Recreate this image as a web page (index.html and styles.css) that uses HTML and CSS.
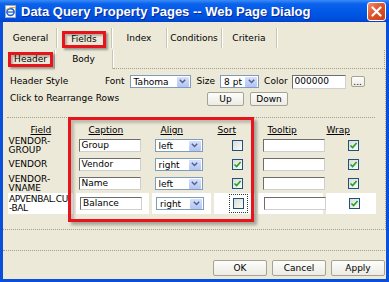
FILE: index.html
```html
<!DOCTYPE html>
<html lang="en">
<head>
    <meta charset="UTF-8">
    <title>Data Query Property Pages -- Web Page Dialog</title>
    <link rel="stylesheet" href="styles.css">
</head>
<body>

    <div class="window">
        <div class="titlebar">
            <svg class="app-icon" width="13" height="13" viewBox="0 0 13 13">
                <rect x="1.5" y="0.5" width="10" height="12" fill="#fff" stroke="#9aa8c0"/>
                <ellipse cx="6.5" cy="7" rx="3.6" ry="3.4" fill="none" stroke="#1b64d8" stroke-width="1.6"/>
                <rect x="3" y="6.4" width="7" height="1.3" fill="#1b64d8"/>
                <path d="M1 6 Q6 1 12 3" fill="none" stroke="#e8a818" stroke-width="1"/>
            </svg>
            <span class="title">Data Query Property Pages -- Web Page Dialog</span>
            <span class="close-btn">
                <svg width="11" height="11" viewBox="0 0 11 11">
                    <path d="M1.5 1.5 L9.5 9.5 M9.5 1.5 L1.5 9.5" stroke="#fff" stroke-width="2.2" stroke-linecap="round"/>
                </svg>
            </span>
        </div>

        <div class="frame">
            <div class="client">
                <div class="tabs">
                    <div class="tab first">General</div>
                    <div class="tab"><span class="marked">Fields</span></div>
                    <div class="tab">Index</div>
                    <div class="tab">Conditions</div>
                    <div class="tab">Criteria</div>
                </div>

                <div class="subtabs">
                    <div class="subtab header-tab"><span class="marked">Header</span></div>
                    <div class="subtab body-tab">Body</div>
                    <div class="subtab-rest"></div>
                </div>

                <div class="sheet">
                    <div class="style-row">
                        <span class="row-label">Header Style</span>
                        <span class="opt-label">Font</span>
                        <span class="select font-select"><span class="val">Tahoma</span><span class="arrow"><svg width="7" height="5" viewBox="0 0 7 5"><path d="M0.8 0.8 L3.5 3.6 L6.2 0.8" fill="none" stroke="#4d6185" stroke-width="1.4"/></svg></span></span>
                        <span class="opt-label size-label">Size</span>
                        <span class="select size-select"><span class="val">8 pt</span><span class="arrow"><svg width="7" height="5" viewBox="0 0 7 5"><path d="M0.8 0.8 L3.5 3.6 L6.2 0.8" fill="none" stroke="#4d6185" stroke-width="1.4"/></svg></span></span>
                        <span class="opt-label color-label">Color</span>
                        <span class="textbox color-box">000000</span>
                        <button class="btn dots-btn">...</button>
                    </div>

                    <div class="order-row">
                        <span class="order-label">Click to Rearrange Rows</span>
                        <button class="btn up-btn">Up</button>
                        <button class="btn down-btn">Down</button>
                    </div>

                    <div class="fields-wrap">
                        <table class="fields">
                            <tr class="head">
                                <th class="c-field">Field</th>
                                <th class="c-caption">Caption</th>
                                <th class="c-align">Align</th>
                                <th class="c-sort">Sort</th>
                                <th class="c-tip">Tooltip</th>
                                <th class="c-wrap">Wrap</th>
                            </tr>
                            <tr>
                                <td class="c-field"><div class="fname">VENDOR-<br>GROUP</div></td>
                                <td class="c-caption"><span class="textbox cap-box">Group</span></td>
                                <td class="c-align"><span class="select align-select"><span class="val">left</span><span class="arrow"><svg width="7" height="5" viewBox="0 0 7 5"><path d="M0.8 0.8 L3.5 3.6 L6.2 0.8" fill="none" stroke="#4d6185" stroke-width="1.4"/></svg></span></span></td>
                                <td class="c-sort"><span class="check"></span></td>
                                <td class="c-tip"><span class="textbox tip-box"></span></td>
                                <td class="c-wrap"><span class="check on"><svg width="9" height="9" viewBox="0 0 9 9"><path d="M1.5 4.5 L3.6 6.6 L7.6 2" fill="none" stroke="#21a121" stroke-width="1.6"/></svg></span></td>
                            </tr>
                            <tr>
                                <td class="c-field"><div class="fname">VENDOR</div></td>
                                <td class="c-caption"><span class="textbox cap-box">Vendor</span></td>
                                <td class="c-align"><span class="select align-select"><span class="val">right</span><span class="arrow"><svg width="7" height="5" viewBox="0 0 7 5"><path d="M0.8 0.8 L3.5 3.6 L6.2 0.8" fill="none" stroke="#4d6185" stroke-width="1.4"/></svg></span></span></td>
                                <td class="c-sort"><span class="check on"><svg width="9" height="9" viewBox="0 0 9 9"><path d="M1.5 4.5 L3.6 6.6 L7.6 2" fill="none" stroke="#21a121" stroke-width="1.6"/></svg></span></td>
                                <td class="c-tip"><span class="textbox tip-box"></span></td>
                                <td class="c-wrap"><span class="check on"><svg width="9" height="9" viewBox="0 0 9 9"><path d="M1.5 4.5 L3.6 6.6 L7.6 2" fill="none" stroke="#21a121" stroke-width="1.6"/></svg></span></td>
                            </tr>
                            <tr>
                                <td class="c-field"><div class="fname">VENDOR-<br>VNAME</div></td>
                                <td class="c-caption"><span class="textbox cap-box">Name</span></td>
                                <td class="c-align"><span class="select align-select"><span class="val">left</span><span class="arrow"><svg width="7" height="5" viewBox="0 0 7 5"><path d="M0.8 0.8 L3.5 3.6 L6.2 0.8" fill="none" stroke="#4d6185" stroke-width="1.4"/></svg></span></span></td>
                                <td class="c-sort"><span class="check on"><svg width="9" height="9" viewBox="0 0 9 9"><path d="M1.5 4.5 L3.6 6.6 L7.6 2" fill="none" stroke="#21a121" stroke-width="1.6"/></svg></span></td>
                                <td class="c-tip"><span class="textbox tip-box"></span></td>
                                <td class="c-wrap"><span class="check on"><svg width="9" height="9" viewBox="0 0 9 9"><path d="M1.5 4.5 L3.6 6.6 L7.6 2" fill="none" stroke="#21a121" stroke-width="1.6"/></svg></span></td>
                            </tr>
                            <tr class="current">
                                <td class="c-field"><div class="fname tight">APVENBAL.CU<br>-BAL</div></td>
                                <td class="c-caption"><span class="textbox cap-box">Balance</span></td>
                                <td class="c-align"><span class="select align-select"><span class="val">right</span><span class="arrow"><svg width="7" height="5" viewBox="0 0 7 5"><path d="M0.8 0.8 L3.5 3.6 L6.2 0.8" fill="none" stroke="#4d6185" stroke-width="1.4"/></svg></span></span></td>
                                <td class="c-sort"><span class="check focus"></span></td>
                                <td class="c-tip"><span class="textbox tip-box"></span></td>
                                <td class="c-wrap"><span class="check on"><svg width="9" height="9" viewBox="0 0 9 9"><path d="M1.5 4.5 L3.6 6.6 L7.6 2" fill="none" stroke="#21a121" stroke-width="1.6"/></svg></span></td>
                            </tr>
                        </table>
                        <!-- annotation box drawn over the caption/align/sort columns -->
                        <div class="highlight"></div>
                    </div>
                </div>

                <div class="divider"></div>

                <div class="actions">
                    <button class="btn action-btn">OK</button>
                    <button class="btn action-btn">Cancel</button>
                    <button class="btn action-btn">Apply</button>
                </div>
            </div>
        </div>
    </div>

</body>
</html>
```

FILE: styles.css
```css
* {
    box-sizing: border-box;
}

body {
    margin: 0;
    font-family: "DejaVu Sans", Tahoma, sans-serif;
    font-size: 9px;
    line-height: 11px;
    color: #000;
    background-color: #ece9d8;
}

.window {
    width: 389px;
    height: 282px;
    display: flex;
    flex-direction: column;
}

/* title bar */
.titlebar {
    height: 22px;
    display: flex;
    align-items: center;
    padding: 0 3px 0 4px;
    background: linear-gradient(#3b8cf7 0%, #0a62ec 18%, #0058e6 55%, #004edc 85%, #0042c8 100%);
}

.app-icon {
    flex: none;
}

.title {
    flex: 1;
    margin-left: 4px;
    font-family: "Liberation Sans", Arial, sans-serif;
    font-weight: bold;
    font-size: 13px;
    color: #fff;
    text-shadow: 1px 1px 0 #0a2a9a;
    white-space: nowrap;
}

.close-btn {
    width: 19px;
    height: 19px;
    display: flex;
    align-items: center;
    justify-content: center;
    border: 1px solid #fff;
    border-radius: 3px;
    background: linear-gradient(135deg, #f09070 0%, #e0542c 45%, #c83c18 100%);
}

/* window frame */
.frame {
    flex: 1;
    display: flex;
    background-color: #0a4fdc;
    padding: 0 3px 3px 3px;
}

.client {
    flex: 1;
    display: flex;
    flex-direction: column;
    background-color: #ece9d8;
}

/* top tabs */
.tabs {
    display: flex;
    height: 20px;
    margin: 6px 0 0 2px;
}

.tab {
    width: 55px;
    display: flex;
    align-items: center;
    justify-content: center;
    border-right: 1px solid #c8c5b4;
    box-shadow: 1px 0 0 #fff;
}

.tab.first {
    width: 52px;
}

.marked {
    border: 3px solid #e8141c;
    box-shadow: 2px 2px 2px rgba(0, 0, 0, 0.35), inset 2px 2px 2px rgba(0, 0, 0, 0.25);
    line-height: 11px;
}

.tab .marked {
    padding: 0 6px;
    margin-top: 3px;
}

/* sub tabs */
.subtabs {
    display: flex;
    height: 19px;
    margin-top: 2px;
    padding-left: 4px;
}

.subtab {
    display: flex;
    align-items: center;
    justify-content: center;
    border-right: 1px solid #c8c5b4;
    box-shadow: 1px 0 0 #fff;
}

.header-tab {
    width: 48px;
}

.header-tab .marked {
    padding: 0 3px;
    line-height: 9px;
}

.body-tab {
    width: 58px;
}

.subtab-rest {
    flex: 1;
    border-bottom: 1px dotted #a19f88;
    border-right: 1px dotted #a19f88;
    margin-right: 1px;
}

/* property sheet */
.sheet {
    height: 161px;
    border-right: 1px dotted #a19f88;
    border-bottom: 1px dotted #a19f88;
}

.style-row, .order-row {
    display: flex;
    align-items: center;
    height: 15px;
    padding-left: 7px;
}

.style-row {
    margin-top: 5px;
}

.order-row {
    margin-top: 2px;
}

.row-label {
    width: 95px;
}

.opt-label {
    margin-right: 5px;
}

.size-label {
    margin-left: 6px;
}

.color-label {
    margin-left: 5px;
    margin-right: 4px;
}

.order-label {
    width: 197px;
}

.select {
    display: inline-flex;
    align-items: center;
    height: 13px;
    padding: 0 1px;
    border: 1px solid #7f9db9;
    background-color: #fff;
}

.select .val {
    flex: 1;
    padding-left: 2px;
    line-height: 10px;
}

.select .arrow {
    width: 12px;
    height: 10px;
    display: flex;
    align-items: center;
    justify-content: center;
    border-radius: 1px;
    background: linear-gradient(#d6e0fd, #b2c4f6);
}

.font-select {
    width: 61px;
}

.size-select {
    width: 39px;
}

.align-select {
    width: 48px;
}

.textbox {
    display: inline-block;
    height: 13px;
    padding: 0 2px;
    line-height: 11px;
    background-color: #fff;
    border: 1px solid;
    border-color: #6d6d6d #cfcfcf #cfcfcf #6d6d6d;
}

.color-box {
    width: 54px;
    height: 14px;
}

.btn {
    font-family: "DejaVu Sans", Tahoma, sans-serif;
    font-size: 9px;
    line-height: 10px;
    padding: 0;
    color: #000;
    border: 1px solid #a4a394;
    border-radius: 2px;
    background: linear-gradient(#fdfdfb, #ecebe4);
}

.dots-btn {
    width: 14px;
    height: 11px;
    margin-left: 5px;
    line-height: 6px;
}

.up-btn {
    width: 37px;
    height: 14px;
}

.down-btn {
    width: 38px;
    height: 14px;
    margin-left: 6px;
}

/* fields grid */
.fields-wrap {
    position: relative;
    margin: 11px 0 0 4px;
    width: 368px;
    border-top: 1px dotted #a19f88;
}

.fields {
    border-collapse: collapse;
    table-layout: fixed;
    width: 368px;
}

.fields td, .fields th {
    padding: 0;
    text-align: left;
    vertical-align: middle;
}

.fields tr {
    height: 19px;
}

.fields tr.head {
    height: 18px;
}

.fields th {
    vertical-align: bottom;
    font-weight: normal;
    text-decoration: underline;
}

.fields tr.current {
    height: 21px;
}

.fields tr.current td {
    background-color: #fff;
    border-left: 3px solid #ece9d8;
}

.fields tr.current td.c-field {
    border-left: 1px solid #ece9d8;
}

.c-field { width: 67px; }
.c-caption { width: 76px; }
.c-align { width: 62px; }
.c-sort { width: 44px; }
.c-tip { width: 68px; }
.c-wrap { width: 51px; }

th.c-field { padding-left: 23px; }
th.c-caption { padding-left: 14px; }
th.c-align { padding-left: 10px; }
th.c-sort { padding-left: 5px; }
th.c-tip { padding-left: 11px; }
th.c-wrap { padding-left: 2px; }

.fname {
    padding-left: 1px;
    line-height: 9px;
    white-space: nowrap;
}

.fname.tight {
    letter-spacing: -0.4px;
}

td.c-caption .textbox {
    margin-left: 4px;
}

td.c-align .select {
    margin-left: 4px;
}

td.c-sort .check {
    margin-left: 19px;
}

td.c-tip .textbox {
    margin-left: 6px;
}

td.c-wrap .check {
    margin-left: 23px;
}

.cap-box, .tip-box {
    width: 62px;
    vertical-align: middle;
}

.check {
    width: 11px;
    height: 11px;
    display: inline-flex;
    align-items: center;
    justify-content: center;
    vertical-align: middle;
    border: 1px solid #1c5180;
    background: linear-gradient(135deg, #dcdcd5, #fbfbf9);
}

.check.focus {
    outline: 1px dotted #333;
    outline-offset: 3px;
}

.highlight {
    position: absolute;
    left: 61px;
    top: -1px;
    width: 186px;
    height: 105px;
    border: 3px solid #e8141c;
    box-shadow: 3px 3px 3px rgba(0, 0, 0, 0.3), inset 3px 3px 3px rgba(0, 0, 0, 0.2);
}

/* bottom buttons */
.divider {
    margin-top: 20px;
    border-top: 1px dotted #a19f88;
    margin-right: 1px;
}

.actions {
    display: flex;
    justify-content: flex-end;
    gap: 5px;
    padding: 9px 1px 0 0;
}

.action-btn {
    width: 54px;
    height: 16px;
}
```
